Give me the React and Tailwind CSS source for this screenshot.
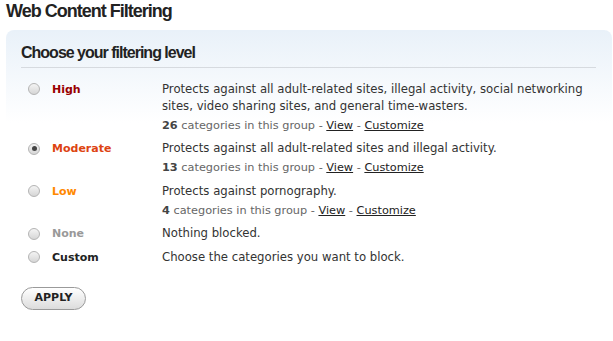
import React, { useState } from 'react';

const levels = [
  {
    id: 'high',
    label: 'High',
    color: 'text-[#990000]',
    desc: 'Protects against all adult-related sites, illegal activity, social networking sites, video sharing sites, and general time-wasters.',
    count: 26,
  },
  {
    id: 'moderate',
    label: 'Moderate',
    color: 'text-[#dd4411]',
    desc: 'Protects against all adult-related sites and illegal activity.',
    count: 13,
  },
  {
    id: 'low',
    label: 'Low',
    color: 'text-[#ff8800]',
    desc: 'Protects against pornography.',
    count: 4,
  },
  {
    id: 'none',
    label: 'None',
    color: 'text-[#999999]',
    desc: 'Nothing blocked.',
  },
  {
    id: 'custom',
    label: 'Custom',
    color: 'text-[#222222]',
    desc: 'Choose the categories you want to block.',
  },
];

function Radio({ checked }) {
  return (
    <span className="mt-[2.5px] flex h-[12px] w-[12px] shrink-0 items-center justify-center rounded-full border border-[#b4b4b4] bg-gradient-to-b from-[#f4f4f4] to-[#d6d6d6]">
      {checked && <span className="h-[5px] w-[5px] rounded-full bg-[#444]"></span>}
    </span>
  );
}

function App() {
  const [level, setLevel] = useState('moderate');

  return (
    <div className="min-h-screen bg-white pl-[6px] pr-[1px] font-['DejaVu_Sans',sans-serif] text-[11px] text-[#333]">
      <h1 className="font-['Liberation_Sans',Arial,sans-serif] text-[18px] font-bold leading-[22px] tracking-[-1px] text-[#222]">
        Web Content Filtering
      </h1>

      <div className="mt-[8px] rounded-t-[8px] bg-gradient-to-b from-[#e9f1f9] to-white to-[30%] pl-[15px] pr-[16px] pt-[13px] pb-[30px]">
        <h2 className="border-b border-[#d6dadf] pb-[4px] font-['Liberation_Sans',Arial,sans-serif] text-[16px] font-bold leading-[20px] tracking-[-1px] text-[#222]">
          Choose your filtering level
        </h2>

        <div className="mt-[12.5px] flex flex-col gap-[6.5px]">
          {levels.map((l) => (
            <div key={l.id} className="flex cursor-pointer" onClick={() => setLevel(l.id)}>
              <div className="flex w-[141px] shrink-0 gap-[12px] pl-[7px]">
                <Radio checked={level === l.id} />
                <span className={`font-bold leading-[17px] ${l.color}`}>{l.label}</span>
              </div>
              <div className="flex-1">
                <p className="text-[11.7px] leading-[17px]">{l.desc}</p>
                {l.count && (
                  <p className="mt-[2px] text-[11.3px] leading-[17px] text-[#666]">
                    <b className="text-[#444]">{l.count}</b> categories in this group -{' '}
                    <a href="#" className="text-[#222] underline">View</a> -{' '}
                    <a href="#" className="text-[#222] underline">Customize</a>
                  </p>
                )}
              </div>
            </div>
          ))}
        </div>

        <button className="mt-[21px] h-[23px] w-[65px] rounded-full border border-[#9a9a9a] bg-gradient-to-b from-white to-[#dcdcdc] text-[11px] font-bold text-[#222]">
          APPLY
        </button>
      </div>
    </div>
  );
}

export default App;
